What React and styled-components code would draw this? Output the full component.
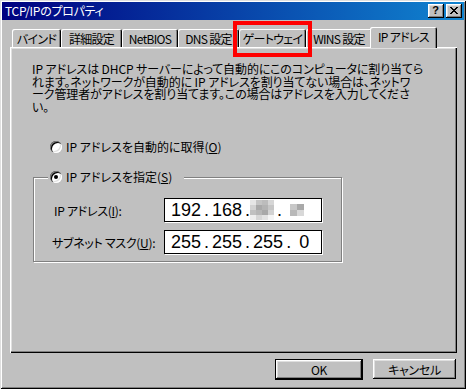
import React from "react";
import styled, { createGlobalStyle } from "styled-components";

const GlobalStyle = createGlobalStyle`
  html, body {
    margin: 0;
    padding: 0;
    background: #c0c0c0;
  }
  body {
    font-family: "Noto Sans CJK JP", "Noto Sans", sans-serif;
    font-size: 12px;
    color: #000;
  }
`;

const raised = `
  box-shadow: inset -1px -1px 0 #000, inset 1px 1px 0 #fff,
    inset -2px -2px 0 #808080, inset 2px 2px 0 #dfdfdf;
`;

const Window = styled.div`
  position: relative;
  width: 466px;
  height: 389px;
  box-sizing: border-box;
  padding: 2px;
  background: #c0c0c0;
  display: flex;
  flex-direction: column;
  box-shadow: inset 1px 1px 0 #dfdfdf, inset -1px -1px 0 #000,
    inset 2px 2px 0 #fff, inset -2px -2px 0 #808080;
`;

const TitleBar = styled.div`
  height: 18px;
  display: flex;
  align-items: center;
  padding: 0 2px 0 3px;
  background: linear-gradient(to right, #000080, #1084d0);
  color: #fff;
`;

const TitleText = styled.div`
  flex: 1;
  font-size: 12px;
  line-height: 18px;
  white-space: nowrap;
  letter-spacing: -0.3px;
  font-feature-settings: "palt";
`;

const CaptionButtons = styled.div`
  display: flex;
  gap: 2px;
`;

const CaptionButton = styled.div`
  width: 16px;
  height: 14px;
  box-sizing: border-box;
  background: #c0c0c0;
  ${raised}
  display: flex;
  align-items: center;
  justify-content: center;
  color: #000;
  font-family: "Liberation Sans", sans-serif;
  font-weight: bold;
  font-size: 11px;
  line-height: 1;
  padding: 0 1px 1px 0;
`;

const Body = styled.div`
  flex: 1;
  display: flex;
  flex-direction: column;
  padding: 7px 7px 0 8px;
`;

const TabStrip = styled.div`
  display: flex;
  align-items: flex-end;
  height: 20px;
  padding-left: 2px;
  position: relative;
  z-index: 1;
`;

const Tab = styled.div`
  width: ${(p) => p.$w}px;
  height: ${(p) => (p.$active ? 21 : 18)}px;
  margin-left: ${(p) => (p.$active ? -2 : 0)}px;
  margin-bottom: ${(p) => (p.$active ? -1 : 0)}px;
  padding-bottom: ${(p) => (p.$active ? 3 : 0)}px;
  box-sizing: border-box;
  background: #c0c0c0;
  border-radius: 2px 2px 0 0;
  box-shadow: inset 1px 1px 0 #fff, inset -1px 0 0 #000, inset -2px 0 0 #808080;
  display: flex;
  align-items: center;
  justify-content: center;
  white-space: nowrap;
  font-size: 12px;
  letter-spacing: -0.7px;
  font-feature-settings: "palt";
  position: relative;
  z-index: ${(p) => (p.$active ? 2 : 1)};
`;

const Panel = styled.div`
  height: 306px;
  box-sizing: border-box;
  padding: 16px 0 0 22px;
  box-shadow: inset 1px 1px 0 #fff, inset -1px -1px 0 #000,
    inset -2px -2px 0 #808080, inset 2px 2px 0 #dfdfdf;
  display: flex;
  flex-direction: column;
  align-items: flex-start;
`;

const Description = styled.p`
  margin: 0;
  white-space: pre;
  line-height: 12.5px;
  font-size: 12px;
  letter-spacing: -0.1px;
  font-feature-settings: "palt";
`;

const RadioRow = styled.label`
  display: flex;
  align-items: center;
  gap: 4px;
  margin-top: ${(p) => p.$top || 0}px;
  padding-left: ${(p) => p.$indent || 0}px;
  font-size: 12px;
  line-height: 14px;
  white-space: nowrap;
  font-feature-settings: "palt";
  background: #c0c0c0;
`;

const Radio = styled.span`
  width: 12px;
  height: 12px;
  flex: none;
  border-radius: 50%;
  background: #fff;
  box-shadow: inset 1px 1px 0 #808080, inset 2px 2px 0 #000,
    inset -1px -1px 0 #fff, inset -2px -2px 0 #dfdfdf;
  display: flex;
  align-items: center;
  justify-content: center;

  &::after {
    content: "";
    width: 4px;
    height: 4px;
    border-radius: 50%;
    background: ${(p) => (p.$checked ? "#000" : "transparent")};
  }
`;

const GroupBox = styled.div`
  margin: 23px 0 0 1px;
  width: 309px;
  height: 85px;
  box-sizing: border-box;
  border: 1px solid #808080;
  box-shadow: inset 1px 1px 0 #fff, 1px 1px 0 #fff;
  display: flex;
  flex-direction: column;
  align-items: flex-start;
  padding: 0 0 0 18px;
`;

const Legend = styled(RadioRow)`
  margin-top: -8px;
  margin-left: -4px;
  padding-left: 2px;
  padding-right: 12px;
`;

const FieldRow = styled.div`
  display: flex;
  align-items: center;
  margin-top: ${(p) => p.$top}px;
`;

const FieldLabel = styled.span`
  width: 112px;
  padding-left: ${(p) => p.$indent || 0}px;
  box-sizing: border-box;
  font-size: 12px;
  white-space: nowrap;
  letter-spacing: -0.3px;
  font-feature-settings: "palt";
`;

const IpBox = styled.div`
  width: 158px;
  height: 24px;
  box-sizing: border-box;
  background: #fff;
  border: 1px solid #000;
  box-shadow: 1px 1px 0 #fff;
  display: flex;
  align-items: center;
  padding-left: 6px;
  font-family: "Liberation Sans", Arial, sans-serif;
  font-size: 18px;
  line-height: 22px;
`;

const Octet = styled.span`
  display: inline-block;
`;

const Dot = styled.span`
  display: inline-block;
  width: 11px;
  text-align: center;
`;

const Mosaic = styled.span`
  display: grid;
  grid-template-columns: repeat(${(p) => p.$cols}, ${(p) => p.$cell}px);
  grid-auto-rows: ${(p) => p.$row}px;
  margin: 0 ${(p) => p.$mr || 0}px 0 ${(p) => p.$ml || 0}px;
`;

const Cell = styled.span`
  background: ${(p) => p.$c};
`;

const Footer = styled.div`
  display: flex;
  justify-content: flex-end;
  align-items: flex-start;
  gap: 10px;
  margin-top: 6px;
  padding-right: 1px;
`;

const Button = styled.div`
  width: ${(p) => p.$w}px;
  height: ${(p) => p.$h}px;
  box-sizing: border-box;
  background: #c0c0c0;
  ${raised}
  border: ${(p) => (p.$default ? "1px solid #000" : "none")};
  display: flex;
  align-items: center;
  justify-content: center;
  font-size: 12px;
  letter-spacing: -0.3px;
  font-feature-settings: "palt";
`;

const Highlight = styled.div`
  position: absolute;
  left: 233px;
  top: 21px;
  width: 79px;
  height: 36px;
  box-sizing: border-box;
  border: 4px solid #ff0000;
  z-index: 5;
`;

const tabs = [
  { label: "バインド", w: 49 },
  { label: "詳細設定", w: 61 },
  { label: "NetBIOS", w: 56 },
  { label: "DNS 設定", w: 61 },
  { label: "ゲートウェイ", w: 67 },
  { label: "WINS 設定", w: 66 },
  { label: "IP アドレス", w: 67, active: true },
];

const description = [
  "IP アドレスは DHCP サーバーによって自動的にこのコンピュータに割り当てら",
  "れます。ネットワークが自動的に IP アドレスを割り当てない場合は、ネットワ",
  "ーク管理者がアドレスを割り当てます。この場合はアドレスを入力してくださ",
  "い。",
].join("\n");

const mosaicA = [
  "#e6e6e6", "#c4c4c4", "#bcbcbc", "#d6d6d6",
  "#d2d2d2", "#a9a9a9", "#b3b3b3", "#c6c6c6",
  "#c0c0c0", "#b6b6b6", "#a8a8a8", "#d2d2d2",
  "#eeeeee", "#d6d6d6", "#e2e2e2", "#f4f4f4",
];

const mosaicB = ["#c8c8c8", "#a9a9a9", "#b8b8b8", "#d8d8d8"];

const CloseIcon = () => (
  <svg width="8" height="7" viewBox="0 0 8 7" shapeRendering="crispEdges">
    <path
      d="M0 0h2v1h1v1h2v-1h1v-1h2v1h-1v1h-1v1h-1v1h1v1h1v1h1v1h-2v-1h-1v-1h-2v1h-1v1h-2v-1h1v-1h1v-1h1v-1h-1v-1h-1v-1h-1z"
      fill="#000"
    />
  </svg>
);

const MosaicBlock = ({ colors, cols, cell, row, ml, mr }) => (
  <Mosaic $cols={cols} $cell={cell} $row={row} $ml={ml} $mr={mr}>
    {colors.map((c, i) => (
      <Cell key={i} $c={c} />
    ))}
  </Mosaic>
);

const App = () => {
  return (
    <>
      <GlobalStyle />
      <Window>
        <TitleBar>
          <TitleText>TCP/IPのプロパティ</TitleText>
          <CaptionButtons>
            <CaptionButton>?</CaptionButton>
            <CaptionButton>
              <CloseIcon />
            </CaptionButton>
          </CaptionButtons>
        </TitleBar>
        <Body>
          <TabStrip>
            {tabs.map((t) => (
              <Tab key={t.label} $w={t.w} $active={t.active}>
                {t.label}
              </Tab>
            ))}
          </TabStrip>
          <Panel>
            <Description>{description}</Description>
            <RadioRow $top={27} $indent={18}>
              <Radio />
              <span>
                IP アドレスを自動的に取得(<u>O</u>)
              </span>
            </RadioRow>
            <GroupBox>
              <Legend>
                <Radio $checked />
                <span>
                  IP アドレスを指定(<u>S</u>)
                </span>
              </Legend>
              <FieldRow $top={14}>
                <FieldLabel $indent={2}>
                  IP アドレス(<u>I</u>):
                </FieldLabel>
                <IpBox>
                  <Octet>192</Octet>
                  <Dot>.</Dot>
                  <Octet>168</Octet>
                  <Dot>.</Dot>
                  <MosaicBlock colors={mosaicA} cols={4} cell={6} row={5} ml={-3} />
                  <Dot>.</Dot>
                  <MosaicBlock colors={mosaicB} cols={2} cell={7} row={6} ml={5} />
                </IpBox>
              </FieldRow>
              <FieldRow $top={8}>
                <FieldLabel>
                  サブネット マスク(<u>U</u>):
                </FieldLabel>
                <IpBox>
                  <Octet>255</Octet>
                  <Dot>.</Dot>
                  <Octet>255</Octet>
                  <Dot>.</Dot>
                  <Octet>255</Octet>
                  <Dot>.</Dot>
                  <Octet>&nbsp;0</Octet>
                </IpBox>
              </FieldRow>
            </GroupBox>
          </Panel>
          <Footer>
            <Button $w={88} $h={21} $default>
              OK
            </Button>
            <Button $w={83} $h={20}>
              キャンセル
            </Button>
          </Footer>
        </Body>
        <Highlight />
      </Window>
    </>
  );
};

export default App;
